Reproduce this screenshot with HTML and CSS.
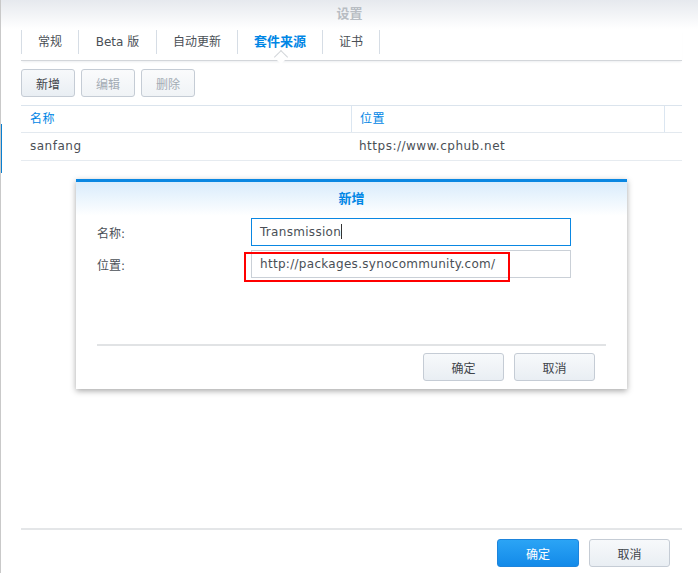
FILE: index.html
```html
<!DOCTYPE html>
<html lang="zh-CN">
<head>
    <meta charset="UTF-8">
    <title>设置</title>
    <link rel="stylesheet" href="styles.css">
</head>
<body>

<div class="window">
    <div class="side-mark"></div>
    <div class="titlebar">设置</div>

    <div class="content">
        <div class="tabs">
            <div class="tab tab-1">常规</div>
            <div class="tab tab-2">Beta 版</div>
            <div class="tab tab-3">自动更新</div>
            <div class="tab tab-4 active">套件来源</div>
            <div class="tab tab-5">证书</div>
        </div>

        <div class="toolbar">
            <button class="btn">新增</button>
            <button class="btn" disabled>编辑</button>
            <button class="btn" disabled>删除</button>
        </div>

        <div class="grid">
            <div class="grid-row grid-head">
                <div class="col-name">名称</div>
                <div class="col-loc">位置</div>
                <div class="col-end"></div>
            </div>
            <div class="grid-row">
                <div class="col-name">sanfang</div>
                <div class="col-loc">https://www.cphub.net</div>
                <div class="col-end"></div>
            </div>
        </div>

        <div class="spacer"></div>

        <div class="footer">
            <button class="btn btn-primary">确定</button>
            <button class="btn btn-cancel">取消</button>
        </div>
    </div>

    <!-- 新增 对话框 -->
    <div class="dialog">
        <div class="dialog-head">新增</div>
        <div class="dialog-body">
            <div class="field">
                <label>名称:</label>
                <div class="input focused">Transmission<span class="caret"></span></div>
            </div>
            <div class="field">
                <label>位置:</label>
                <div class="input">http://packages.synocommunity.com/</div>
            </div>
            <div class="highlight"></div>
        </div>
        <div class="dialog-foot">
            <button class="btn btn-dlg">确定</button>
            <button class="btn btn-dlg">取消</button>
        </div>
    </div>
</div>

</body>
</html>
```

FILE: styles.css
```css
* {
    box-sizing: border-box;
}
body {
    margin: 0;
    padding: 0;
    background-color: #ffffff;
    font-family: "DejaVu Sans", "Noto Sans CJK SC", sans-serif;
    font-size: 12px;
    color: #4a4f56;
}
.window {
    position: relative;
    width: 698px;
    height: 573px;
    border-left: 1px solid #c9c9c9;
    display: flex;
    flex-direction: column;
    overflow: hidden;
}
.side-mark {
    position: absolute;
    left: -1px;
    top: 124px;
    width: 2px;
    height: 49px;
    background-color: #0a7fd0;
}
.titlebar {
    height: 29px;
    line-height: 28px;
    text-align: center;
    font-size: 13px;
    font-weight: bold;
    color: #b8bdc3;
    background: linear-gradient(#e6e9ee, #ffffff);
}
.content {
    flex: 1;
    display: flex;
    flex-direction: column;
    padding: 0 16px 0 20px;
}
.tabs {
    position: relative;
    display: flex;
    height: 32px;
    border-bottom: 1px solid #d3d6da;
    box-shadow: 0 2px 2px -1px #eceef0;
}
.tab {
    height: 24px;
    margin-top: 1px;
    line-height: 24px;
    text-align: center;
    border-left: 1px solid #d6dde5;
    font-size: 12px;
    color: #4a4f56;
}
.tab-1 { width: 57px; }
.tab-2 { width: 78px; }
.tab-3 { width: 81px; }
.tab-4 { width: 85px; }
.tab-5 { width: 58px; border-right: 1px solid #d6dde5; }
.tab.active {
    position: relative;
    color: #0086e5;
    font-weight: bold;
    font-size: 13px;
}
.tab.active::after {
    content: "";
    position: absolute;
    left: 38px;
    bottom: -8px;
    width: 9px;
    height: 9px;
    background: #ffffff;
    border-left: 1px solid #d3d6da;
    border-top: 1px solid #d3d6da;
    transform: rotate(45deg);
}
.toolbar {
    display: flex;
    gap: 6px;
    margin-top: 8px;
}
.btn {
    height: 28px;
    width: 54px;
    padding: 0;
    border: 1px solid #c5ccd5;
    border-radius: 3px;
    background: linear-gradient(#f7f9fb, #e9eef3);
    font-family: "DejaVu Sans", "Noto Sans CJK SC", sans-serif;
    font-size: 12px;
    color: #3f444a;
}
.btn:disabled {
    color: #a3abb4;
    background: linear-gradient(#fafbfc, #f0f3f6);
}
.grid {
    margin-top: 8px;
    border-top: 1px solid #dbe4ed;
    letter-spacing: 0.5px;
}
.grid-row {
    display: flex;
    height: 28px;
    line-height: 27px;
    border-bottom: 1px solid #e6ebf0;
}
.grid-head {
    height: 27px;
    line-height: 26px;
    color: #0086e5;
    border-bottom-color: #e3e9ef;
}
.col-name {
    width: 330px;
    padding-left: 9px;
}
.col-loc {
    width: 313px;
    padding-left: 8px;
}
.col-end {
    flex: 1;
}
.grid-head .col-loc,
.grid-head .col-end {
    border-left: 1px solid #dbe6f1;
}
.spacer {
    flex: 1;
}
.footer {
    display: flex;
    justify-content: flex-end;
    gap: 10px;
    height: 45px;
    padding-top: 9px;
    padding-right: 12px;
    border-top: 2px solid #e4e6e8;
}
.footer .btn {
    width: 82px;
}
.footer .btn-cancel {
    width: 81px;
}
.btn-primary {
    color: #ffffff;
    border-color: #1d84dc;
    background: linear-gradient(#2ba4f5, #138ae9);
}

/* dialog */
.dialog {
    position: absolute;
    left: 75px;
    top: 179px;
    width: 551px;
    height: 210px;
    background-color: #ffffff;
    border-top: 3px solid #0a87e2;
    box-shadow: 0 2px 6px rgba(0, 0, 0, 0.35);
}
.dialog-head {
    height: 34px;
    line-height: 34px;
    text-align: center;
    font-size: 13px;
    font-weight: bold;
    color: #0086e5;
    background: linear-gradient(#d9ecfc, #ffffff);
}
.dialog-body {
    position: relative;
    height: 130px;
    margin: 0 21px;
    padding-top: 2px;
    border-bottom: 2px solid #e1e3e5;
}
.field {
    display: flex;
    align-items: center;
    height: 28px;
}
.field + .field {
    margin-top: 4px;
}
.field label {
    width: 154px;
    color: #4a4f56;
}
.input {
    width: 320px;
    height: 28px;
    line-height: 26px;
    padding-left: 8px;
    border: 1px solid #cad0d7;
    font-size: 12px;
    letter-spacing: 0.3px;
    color: #4a4f56;
    white-space: nowrap;
}
.input.focused {
    border-color: #0a87e2;
}
.caret {
    display: inline-block;
    width: 1px;
    height: 15px;
    vertical-align: -3px;
    background-color: #333333;
}
.highlight {
    position: absolute;
    left: 147px;
    top: 36px;
    width: 266px;
    height: 30px;
    border: 2px solid #ff0000;
}
.dialog-foot {
    display: flex;
    justify-content: flex-end;
    gap: 10px;
    padding: 7px 32px 0 0;
}
.btn-dlg {
    width: 81px;
}
```
